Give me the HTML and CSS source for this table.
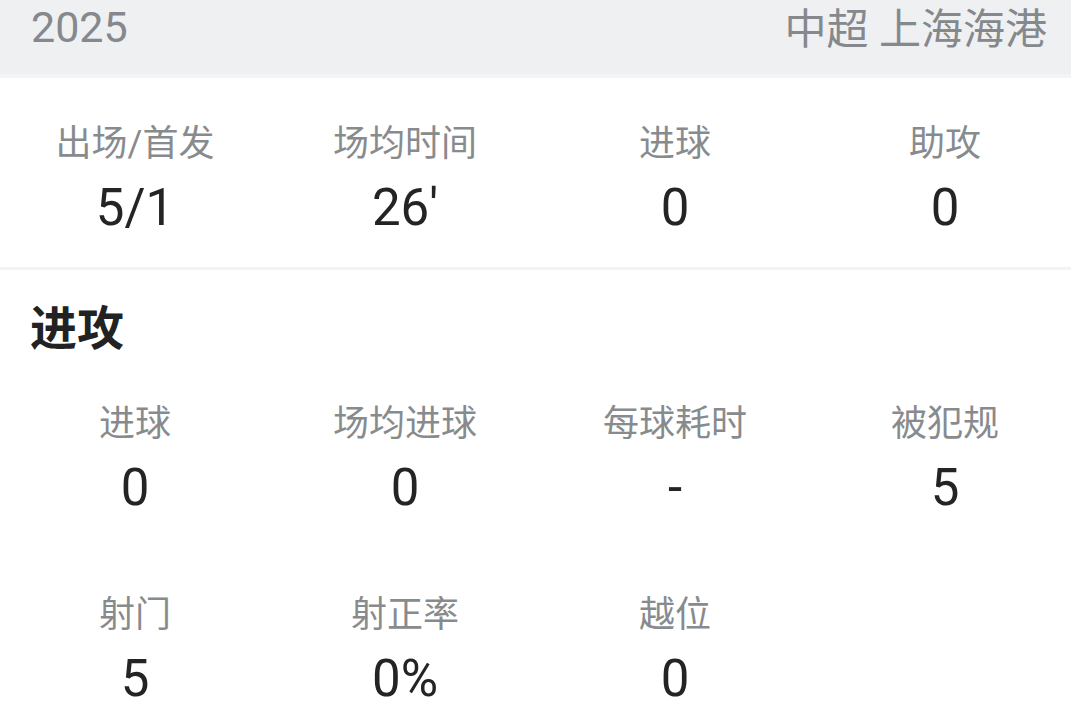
FILE: index.html
```html
<!DOCTYPE html>
<html lang="zh-CN">
<head>
<meta charset="utf-8">
<title>球员数据</title>
<link rel="stylesheet" href="styles.css">
</head>
<body>
<div class="page">
  <header class="season-bar">
    <span class="season-year">2025</span>
    <span class="season-team">中超 上海海港</span>
  </header>

  <section class="summary">
    <div class="stat-grid">
      <div class="stat"><div class="stat-label">出场/首发</div><div class="stat-value">5/1</div></div>
      <div class="stat"><div class="stat-label">场均时间</div><div class="stat-value">26'</div></div>
      <div class="stat"><div class="stat-label">进球</div><div class="stat-value">0</div></div>
      <div class="stat"><div class="stat-label">助攻</div><div class="stat-value">0</div></div>
    </div>
  </section>

  <section class="group">
    <h2 class="group-title">进攻</h2>
    <div class="stat-grid rows">
      <div class="stat"><div class="stat-label">进球</div><div class="stat-value">0</div></div>
      <div class="stat"><div class="stat-label">场均进球</div><div class="stat-value">0</div></div>
      <div class="stat"><div class="stat-label">每球耗时</div><div class="stat-value">-</div></div>
      <div class="stat"><div class="stat-label">被犯规</div><div class="stat-value">5</div></div>
      <div class="stat"><div class="stat-label">射门</div><div class="stat-value">5</div></div>
      <div class="stat"><div class="stat-label">射正率</div><div class="stat-value">0%</div></div>
      <div class="stat"><div class="stat-label">越位</div><div class="stat-value">0</div></div>
    </div>
  </section>
</div>
</body>
</html>
```

FILE: styles.css
```css
* {
  box-sizing: border-box;
}

html, body {
  margin: 0;
  padding: 0;
  background: #ffffff;
}

body {
  font-family: Roboto, "Noto Sans CJK SC", sans-serif;
  color: #222222;
  overflow: hidden;
}

.page {
  width: 1071px;
  height: 721px;
  overflow: hidden;
}

.season-bar {
  display: flex;
  justify-content: space-between;
  align-items: flex-start;
  height: 78px;
  padding: 0 24px 0 31px;
  background: #eef0f2;
  border-bottom: 4px solid #f3f4f6;
}

.season-year {
  font-size: 43px;
  line-height: 54px;
  color: #85888c;
}

.season-team {
  font-size: 42px;
  line-height: 54px;
  padding-top: 3px;
  color: #85888c;
}

.summary {
  padding: 37px 0 29px;
  border-bottom: 3px solid #f3f3f3;
}

.stat-grid {
  display: grid;
  grid-template-columns: repeat(4, 270px);
}

.stat-grid.rows {
  row-gap: 68px;
}

.stat {
  display: flex;
  flex-direction: column;
  align-items: center;
  gap: 5px;
}

.stat-label {
  font-size: 36px;
  line-height: 58px;
  color: #888b8e;
}

.stat-value {
  font-size: 51px;
  line-height: 60px;
  color: #242424;
}

.group {
  padding-top: 29px;
}

.group-title {
  margin: 0 0 36px;
  padding-left: 30px;
  font-size: 47px;
  line-height: 60px;
  font-weight: 700;
  color: #222222;
}
```
